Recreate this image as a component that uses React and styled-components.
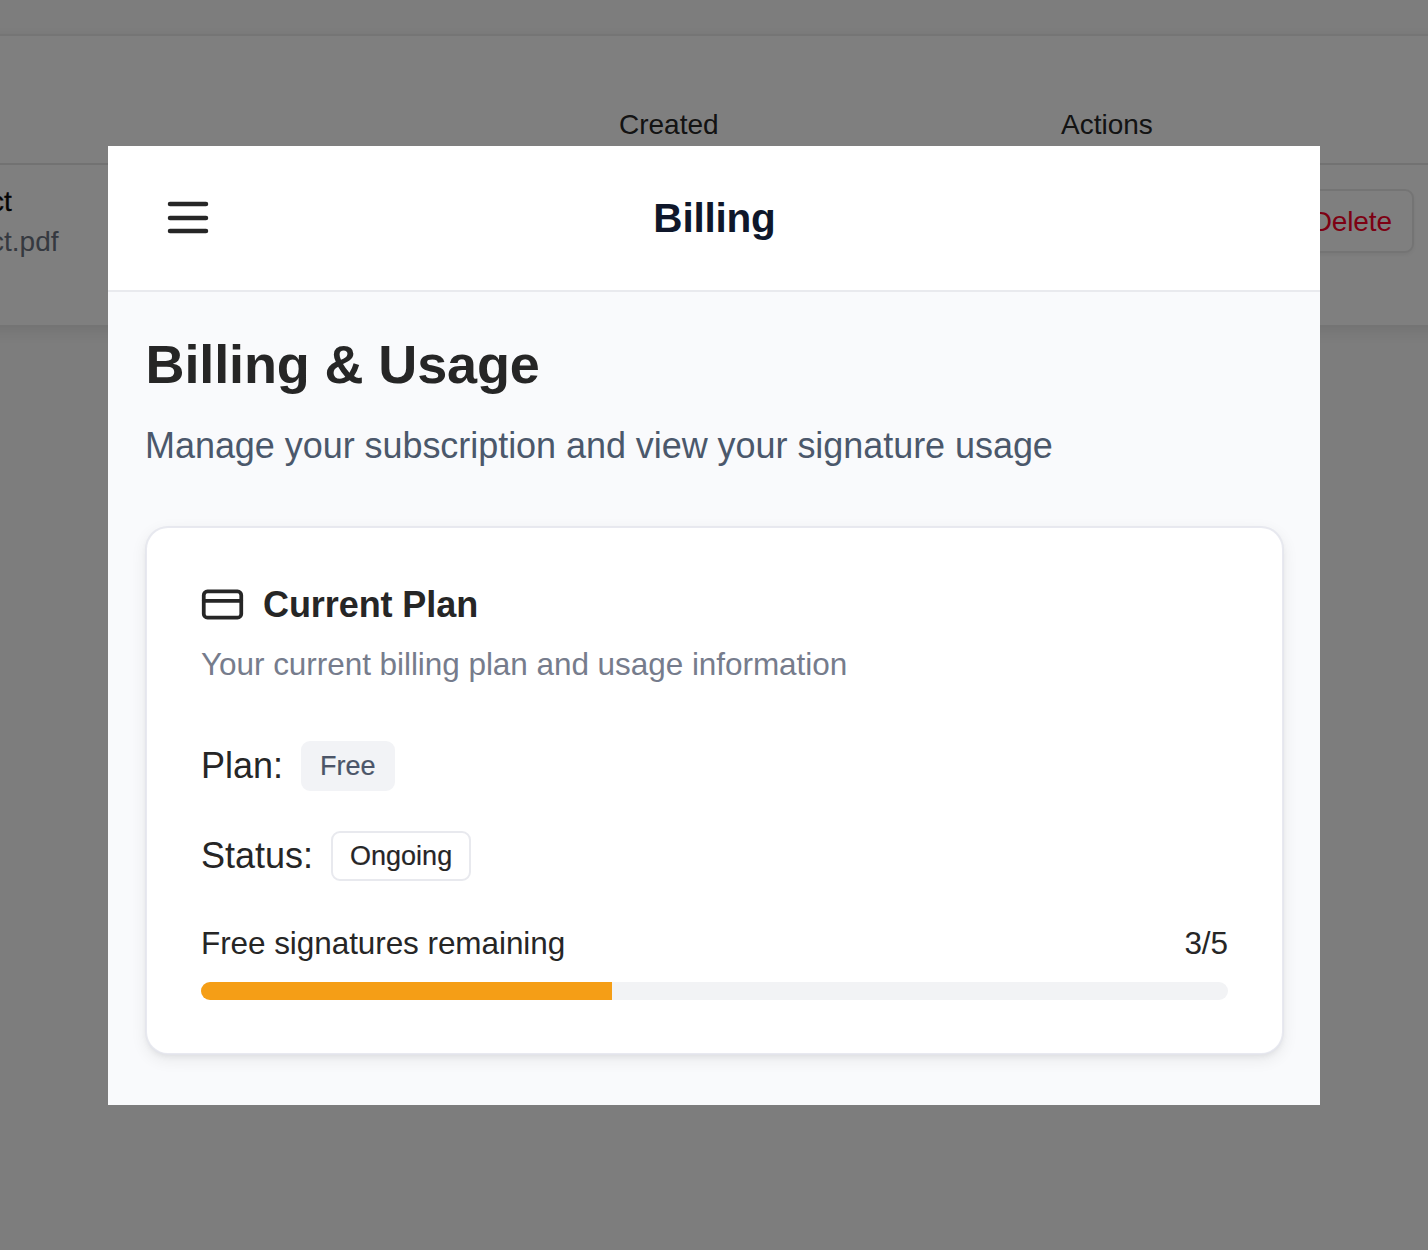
import React from "react";
import styled, { createGlobalStyle } from "styled-components";

const GlobalStyle = createGlobalStyle`
  * { box-sizing: border-box; }
  html, body { margin: 0; padding: 0; background: #fdfdfd; }
  body {
    font-family: "Liberation Sans", Arial, Helvetica, sans-serif;
    color: #262626;
    overflow: hidden;
  }
  h1, h2, h3, p { margin: 0; font-weight: 400; }
`;

const Page = styled.main`
  position: relative;
  width: 1428px;
  height: 1250px;
  overflow: hidden;
  padding-top: 34px;
  background: #fbfbfb;
`;

const TablePanel = styled.section`
  height: 293px;
  margin: 0 -40px;
  padding: 0 40px;
  border-top: 2px solid #ebebeb;
  border-bottom: 2px solid #e8e8e8;
  background: #ffffff;
  box-shadow: 0 5px 16px rgba(0, 0, 0, 0.09);
`;

const TableRow = styled.div`
  display: grid;
  grid-template-columns: 619px 442px 1fr;
  font-size: 28px;
  line-height: 40px;
`;

const TableHead = styled(TableRow)`
  height: 129px;
  margin: 0 -40px;
  padding: 69px 40px 0;
  border-bottom: 2px solid #e5e5e5;
  color: #262626;
`;

const TableBody = styled(TableRow)`
  padding-top: 17px;
`;

const FileCell = styled.div`
  margin-left: -10px;
`;

const FileName = styled.p`
  color: #0a0a0a;
  -webkit-text-stroke: 0.3px #0a0a0a;
`;

const FilePath = styled.p`
  color: #6b7280;
`;

const ActionCell = styled.div`
  grid-column: 3;
  display: flex;
  justify-content: flex-end;
  padding: 7px 14px 0 0;
`;

const DeleteButton = styled.button`
  height: 64px;
  padding: 2px 20px 0;
  border: 2px solid #e9e9e9;
  border-radius: 9px;
  background: #ffffff;
  box-shadow: 0 2px 4px rgba(0, 0, 0, 0.06);
  color: #fa0026;
  font: inherit;
  letter-spacing: -0.1px;
`;

const Overlay = styled.div`
  position: absolute;
  inset: 0;
  padding: 146px 108px 145px;
  background: rgba(0, 0, 0, 0.5);
`;

const Dialog = styled.div`
  display: flex;
  flex-direction: column;
  height: 959px;
  background: #f9fafc;
`;

const DialogHeader = styled.header`
  display: grid;
  grid-template-columns: 1fr auto 1fr;
  align-items: center;
  height: 146px;
  padding: 0 54px 0 53px;
  border-bottom: 2px solid #e9eaee;
  background: #ffffff;
`;

const MenuButton = styled.button`
  display: flex;
  width: 54px;
  height: 54px;
  padding: 0;
  border: 0;
  background: none;
  color: #262626;
`;

const HeaderTitle = styled.h1`
  padding-left: 2px;
  color: #0f172a;
  font-size: 40.5px;
  font-weight: 700;
  line-height: 54px;
  letter-spacing: -0.2px;
`;

const DialogBody = styled.div`
  padding: 39px 36px 0 37px;
`;

const PageTitle = styled.h2`
  padding-left: 0.5px;
  font-size: 54px;
  font-weight: 700;
  line-height: 66px;
  letter-spacing: -0.12px;
`;

const PageSubtitle = styled.p`
  margin-top: 22px;
  color: #4b586b;
  font-size: 36px;
  line-height: 54px;
  letter-spacing: -0.05px;
`;

const Card = styled.section`
  margin-top: 53px;
  padding: 58px 54px 53px;
  border: 2px solid rgba(228, 229, 236, 0.8);
  border-radius: 23px;
  background: #ffffff;
  background-clip: padding-box;
  box-shadow: 0 5px 16px rgba(0, 0, 0, 0.07), 0 3px 6px -2px rgba(0, 0, 0, 0.07);
`;

const CardTitleRow = styled.div`
  display: flex;
  align-items: center;
  gap: 18px;
  height: 36px;
  margin-left: -1px;
`;

const CardTitle = styled.h3`
  padding-top: 2px;
  font-size: 36px;
  font-weight: 700;
  line-height: 36px;
  letter-spacing: -0.08px;
`;

const CardDescription = styled.p`
  margin-top: 20px;
  color: #767c8c;
  font-size: 31.5px;
  line-height: 44px;
  letter-spacing: -0.05px;
`;

const Facts = styled.div`
  display: flex;
  flex-direction: column;
  gap: 36px;
  margin-top: 53px;
`;

const Fact = styled.div`
  display: flex;
  align-items: center;
  gap: 18px;
  height: 54px;
  font-size: 36px;
  line-height: 54px;
`;

const Badge = styled.span`
  display: inline-flex;
  align-items: center;
  height: 50px;
  margin-bottom: 1px;
  padding: 0 17px;
  border: 2px solid ${(p) => (p.$outlined ? "#e8e9ee" : "#f2f3f6")};
  border-radius: 9px;
  background: ${(p) => (p.$outlined ? "#ffffff" : "#f2f3f6")};
  color: ${(p) => (p.$outlined ? "#262626" : "#4b5568")};
  font-size: 27px;
  line-height: 36px;
  -webkit-text-stroke: 0.2px currentColor;
`;

const UsageRow = styled.div`
  display: flex;
  justify-content: space-between;
  margin-top: 38px;
  font-size: 31.5px;
  line-height: 45px;
  letter-spacing: -0.07px;
`;

const Track = styled.div`
  height: 18px;
  margin-top: 16px;
  overflow: hidden;
  border-radius: 9px;
  background: #f2f3f5;
`;

const Fill = styled.div`
  height: 100%;
  background: #f59e16;
`;

const MenuIcon = () => (
  <svg width="54" height="54" viewBox="0 0 24 24" fill="none" stroke="currentColor" strokeWidth="2" strokeLinecap="round">
    <path d="M4 5.8h16M4 12h16M4 17.8h16" />
  </svg>
);

const CardIcon = () => (
  <svg width="45" height="45" viewBox="0 0 24 24" fill="none" stroke="currentColor" strokeWidth="2" strokeLinecap="round">
    <rect x="2" y="5" width="20" height="14" rx="2" />
    <path d="M2 10h20" />
  </svg>
);

const facts = [
  { label: "Plan:", value: "Free", outlined: false },
  { label: "Status:", value: "Ongoing", outlined: true },
];

export default function App() {
  const usedShare = 2 / 5;
  return (
    <Page>
      <GlobalStyle />
      <TablePanel>
        <TableHead>
          <span />
          <span>Created</span>
          <span>Actions</span>
        </TableHead>
        <TableBody>
          <FileCell>
            <FileName>ct</FileName>
            <FilePath>ct.pdf</FilePath>
          </FileCell>
          <ActionCell>
            <DeleteButton>Delete</DeleteButton>
          </ActionCell>
        </TableBody>
      </TablePanel>
      <Overlay>
        <Dialog>
          <DialogHeader>
            <MenuButton aria-label="Menu">
              <MenuIcon />
            </MenuButton>
            <HeaderTitle>Billing</HeaderTitle>
          </DialogHeader>
          <DialogBody>
            <PageTitle>Billing &amp; Usage</PageTitle>
            <PageSubtitle>Manage your subscription and view your signature usage</PageSubtitle>
            <Card>
              <CardTitleRow>
                <CardIcon />
                <CardTitle>Current Plan</CardTitle>
              </CardTitleRow>
              <CardDescription>Your current billing plan and usage information</CardDescription>
              <Facts>
                {facts.map((fact) => (
                  <Fact key={fact.label}>
                    <span>{fact.label}</span>
                    <Badge $outlined={fact.outlined}>{fact.value}</Badge>
                  </Fact>
                ))}
              </Facts>
              <UsageRow>
                <span>Free signatures remaining</span>
                <span>3/5</span>
              </UsageRow>
              <Track>
                <Fill style={{ width: `${usedShare * 100}%` }} />
              </Track>
            </Card>
          </DialogBody>
        </Dialog>
      </Overlay>
    </Page>
  );
}
